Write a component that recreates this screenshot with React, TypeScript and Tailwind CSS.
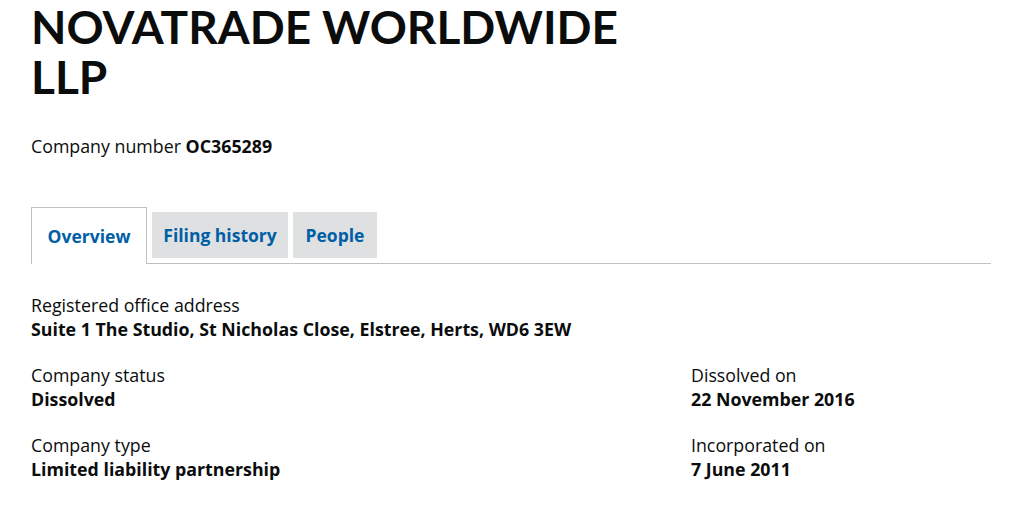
export default function App() {
  return (
    <div className="w-[1013px] h-[518px] bg-white text-[#0b0c0c] font-['Open_Sans','Liberation_Sans',sans-serif]">
      <div className="px-[31px]">
        <h1 className="text-[46px] leading-[50px] font-bold pt-[2px] w-[640px] font-['Lato','Liberation_Sans',sans-serif]">
          NOVATRADE WORLDWIDE LLP
        </h1>

        <p className="mt-[32px] text-[17.8px] leading-[24px]">
          Company number <strong className="font-bold">OC365289</strong>
        </p>

        {/* Tabs */}
        <div className="mt-[49px] flex items-end gap-[5px] border-b border-[#bfc1c3] w-[960px]">
          <div className="-mb-px border border-b-0 border-[#bfc1c3] bg-white h-[57px] w-[116px] flex items-center justify-center">
            <span className="text-[17.5px] font-bold text-[#005ea5]">Overview</span>
          </div>
          <div className="mb-[5px] bg-[#dee0e2] h-[46px] w-[136px] flex items-center justify-center">
            <span className="text-[17.5px] font-bold text-[#005ea5]">Filing history</span>
          </div>
          <div className="mb-[5px] bg-[#dee0e2] h-[46px] w-[84px] flex items-center justify-center">
            <span className="text-[17.5px] font-bold text-[#005ea5]">People</span>
          </div>
        </div>

        <dl className="mt-[29px] text-[17.8px] leading-[24px]">
          <dt>Registered office address</dt>
          <dd className="font-bold">Suite 1 The Studio, St Nicholas Close, Elstree, Herts, WD6 3EW</dd>
        </dl>

        <div className="mt-[22px] flex">
          <dl className="w-[660px] text-[17.8px] leading-[24px] flex flex-col gap-[22px]">
            <div>
              <dt>Company status</dt>
              <dd className="font-bold">Dissolved</dd>
            </div>
            <div>
              <dt>Company type</dt>
              <dd className="font-bold">Limited liability partnership</dd>
            </div>
          </dl>
          <dl className="text-[17.8px] leading-[24px] flex flex-col gap-[22px]">
            <div>
              <dt>Dissolved on</dt>
              <dd className="font-bold">22 November 2016</dd>
            </div>
            <div>
              <dt>Incorporated on</dt>
              <dd className="font-bold">7 June 2011</dd>
            </div>
          </dl>
        </div>
      </div>
    </div>
  );
}
